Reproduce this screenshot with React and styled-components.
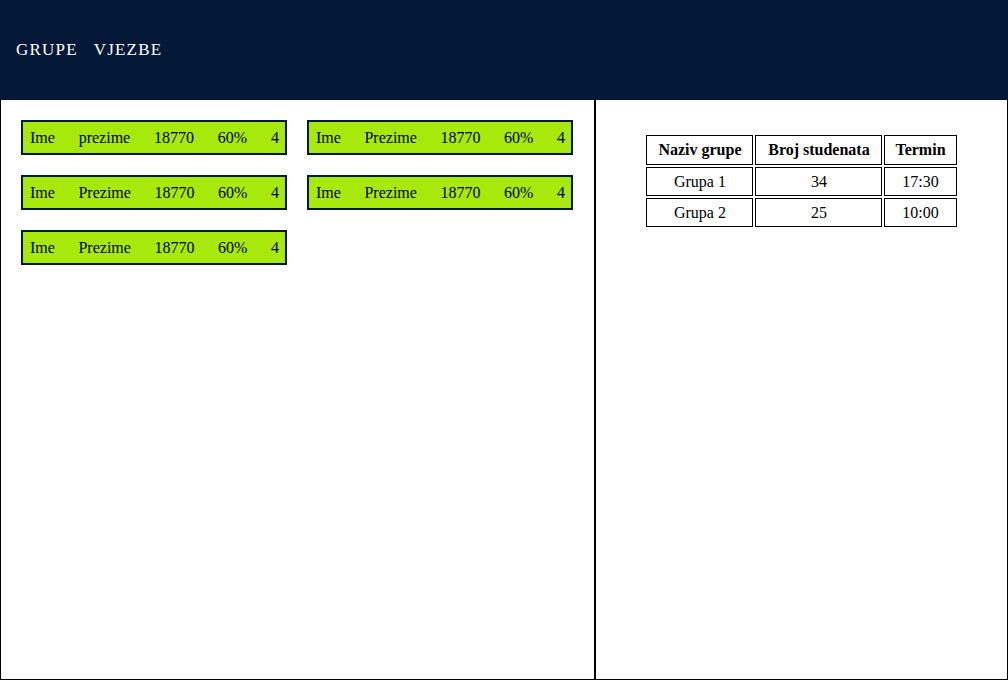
import React from "react";
import styled, { createGlobalStyle } from "styled-components";

const GlobalStyle = createGlobalStyle`
  html, body {
    margin: 0;
    padding: 0;
    background: #ffffff;
  }
  body {
    font-family: "Liberation Serif", "Times New Roman", serif;
    font-size: 16px;
    color: #000000;
  }
`;

const Page = styled.div`
  width: 1008px;
  height: 680px;
  display: flex;
  flex-direction: column;
`;

const Header = styled.header`
  height: 100px;
  background: #041937;
  display: flex;
  align-items: center;
  padding: 0 16px;
  box-sizing: border-box;
`;

const NavLink = styled.a`
  color: #ffffff;
  font-size: 17px;
  letter-spacing: 1.2px;
  text-transform: uppercase;
  text-decoration: none;
  margin-right: 16px;
  cursor: pointer;
`;

const Main = styled.main`
  flex: 1;
  display: flex;
  min-height: 0;
`;

const LeftPanel = styled.section`
  width: 595px;
  border: 1px solid #000000;
  border-top: none;
  box-sizing: border-box;
  padding: 20px;
  display: flex;
  flex-wrap: wrap;
  align-content: flex-start;
  gap: 20px;
`;

const RightPanel = styled.section`
  flex: 1;
  border: 1px solid #000000;
  border-top: none;
  box-sizing: border-box;
  padding-top: 33px;
  display: flex;
  justify-content: center;
  align-items: flex-start;
`;

const StudentCard = styled.div`
  width: 266px;
  height: 35px;
  box-sizing: border-box;
  background: #a7e90b;
  border: 2px solid #041937;
  padding: 0 6px 0 7px;
  display: flex;
  align-items: center;
  justify-content: space-between;
`;

const Table = styled.table`
  border-spacing: 2px;
  border-collapse: separate;
`;

const Th = styled.th`
  border: 1px solid #000000;
  padding: 5px 10px;
  line-height: 18px;
  font-weight: bold;
  width: ${(p) => p.$w}px;
  white-space: nowrap;
`;

const Td = styled.td`
  border: 1px solid #000000;
  padding: 5px 10px 4px;
  line-height: 18px;
  text-align: center;
`;

const students = [
  { ime: "Ime", prezime: "prezime", index: "18770", procenat: "60%", ocjena: "4" },
  { ime: "Ime", prezime: "Prezime", index: "18770", procenat: "60%", ocjena: "4" },
  { ime: "Ime", prezime: "Prezime", index: "18770", procenat: "60%", ocjena: "4" },
  { ime: "Ime", prezime: "Prezime", index: "18770", procenat: "60%", ocjena: "4" },
  { ime: "Ime", prezime: "Prezime", index: "18770", procenat: "60%", ocjena: "4" },
];

const grupe = [
  { naziv: "Grupa 1", broj: 34, termin: "17:30" },
  { naziv: "Grupa 2", broj: 25, termin: "10:00" },
];

function App() {
  return (
    <Page>
      <GlobalStyle />
      <Header>
        <NavLink>Grupe</NavLink>
        <NavLink>Vjezbe</NavLink>
      </Header>
      <Main>
        <LeftPanel>
          {students.map((s, i) => (
            <StudentCard key={i}>
              <span>{s.ime}</span>
              <span>{s.prezime}</span>
              <span>{s.index}</span>
              <span>{s.procenat}</span>
              <span>{s.ocjena}</span>
            </StudentCard>
          ))}
        </LeftPanel>
        <RightPanel>
          <Table>
            <thead>
              <tr>
                <Th $w={85}>Naziv grupe</Th>
                <Th $w={105}>Broj studenata</Th>
                <Th $w={46}>Termin</Th>
              </tr>
            </thead>
            <tbody>
              {grupe.map((g) => (
                <tr key={g.naziv}>
                  <Td>{g.naziv}</Td>
                  <Td>{g.broj}</Td>
                  <Td>{g.termin}</Td>
                </tr>
              ))}
            </tbody>
          </Table>
        </RightPanel>
      </Main>
    </Page>
  );
}

export default App;
